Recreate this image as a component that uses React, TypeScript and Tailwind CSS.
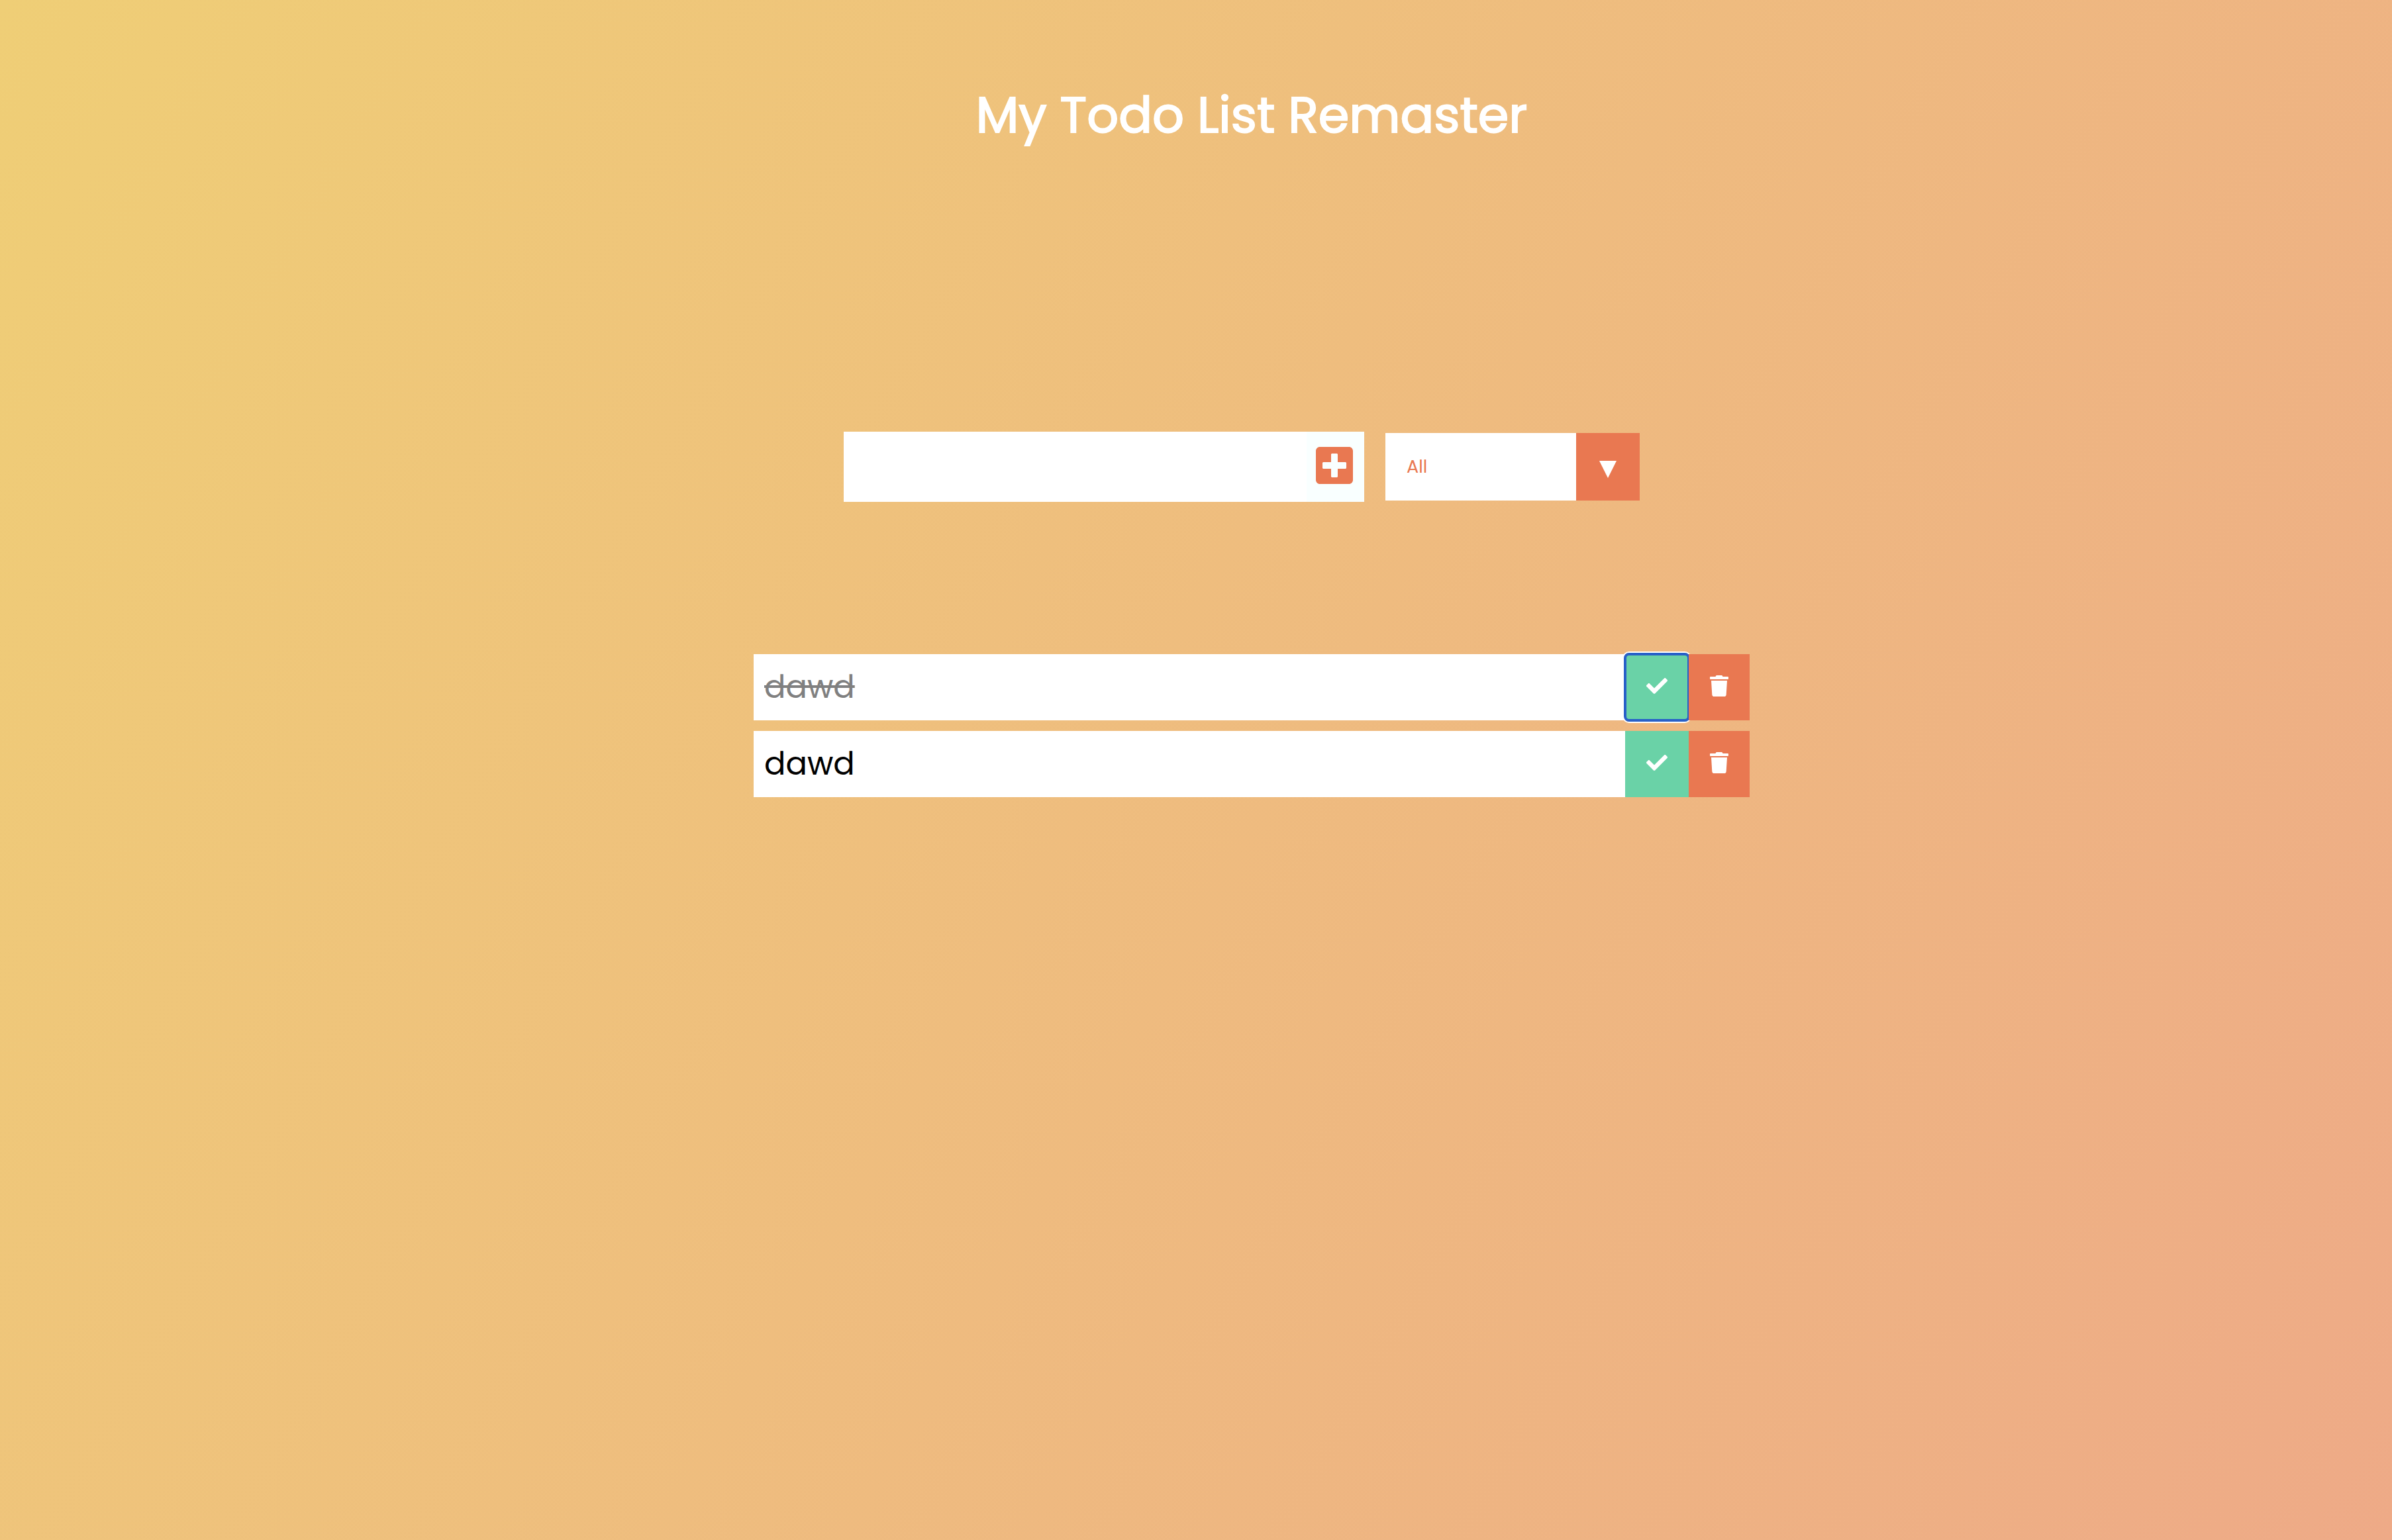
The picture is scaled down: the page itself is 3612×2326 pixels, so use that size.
import { useState } from "react";
import { FaCheck, FaPlusSquare, FaTrash } from "react-icons/fa";

type Todo = { id: number; text: string; completed: boolean };

const initialTodos: Todo[] = [
  { id: 1, text: "dawd", completed: true },
  { id: 2, text: "dawd", completed: false },
];

function TodoForm({ onAdd }: { onAdd: (text: string) => void }) {
  const [text, setText] = useState("");
  return (
    <form
      className="flex"
      onSubmit={(e) => {
        e.preventDefault();
        if (text.trim()) onAdd(text.trim());
        setText("");
      }}
    >
      <input
        type="text"
        aria-label="New todo"
        value={text}
        onChange={(e) => setText(e.target.value)}
        className="h-[106px] w-[699px] bg-white px-4 text-5xl text-black outline-none"
      />
      <button type="submit" aria-label="Add todo" className="flex w-[87px] items-center bg-[#f9ffff] pb-1 pl-3.5 text-[64px] text-[#e97851]">
        <FaPlusSquare className="w-14" />
      </button>
    </form>
  );
}

function TodoFilter({ value, onChange }: { value: string; onChange: (value: string) => void }) {
  return (
    <div className="relative w-96">
      <select
        aria-label="Filter todos"
        value={value}
        onChange={(e) => onChange(e.target.value)}
        className="h-[102px] w-full appearance-none bg-white px-8 text-[27px] text-[#e97851] outline-none"
      >
        <option value="all">All</option>
        <option value="completed">Completed</option>
        <option value="uncompleted">Uncompleted</option>
      </select>
      <div className="pointer-events-none absolute inset-y-0 right-0 flex w-24 items-center justify-center bg-[#e97851] pt-2">
        <svg width="26" height="26" viewBox="0 0 26 26" fill="white" aria-hidden="true">
          <path d="M0 0H26L13 26Z" />
        </svg>
      </div>
    </div>
  );
}

function TodoItem({ todo, focused, onToggle, onRemove }: { todo: Todo; focused: boolean; onToggle: () => void; onRemove: () => void }) {
  return (
    <li className="flex h-[100px] bg-white text-[32px] text-white">
      <span className={todo.completed ? "flex flex-1 items-center px-4 text-5xl text-[#808080]" : "flex flex-1 items-center px-4 text-5xl text-black"}>
        <span className={todo.completed ? "line-through decoration-4" : ""}>{todo.text}</span>
      </span>
      <button
        type="button"
        aria-label="Complete"
        onClick={onToggle}
        className={
          focused
            ? "relative flex items-center bg-[#6ad2a7] px-8 pb-1 outline-none after:absolute after:-inset-0.5 after:rounded-lg after:border-4 after:border-[#2860c8] after:shadow-[0_0_0_2px_white]"
            : "relative flex items-center bg-[#6ad2a7] px-8 pb-1 outline-none"
        }
      >
        <FaCheck />
      </button>
      <button type="button" aria-label="Delete" onClick={onRemove} className="relative z-10 flex items-center bg-[#e97851] px-8 pb-1">
        <FaTrash className="w-7" />
      </button>
    </li>
  );
}

export default function App() {
  const [todos, setTodos] = useState(initialTodos);
  const [filter, setFilter] = useState("all");
  const [focusedId, setFocusedId] = useState(1);
  const visible = todos.filter((t) => filter === "all" || (filter === "completed") === t.completed);

  return (
    <div className="flex min-h-screen flex-col items-center bg-[linear-gradient(120deg,#efce76,#eeaa87)] pl-[168px] font-['Poppins',Inter,sans-serif]">
      <header className="pt-[114px]">
        <h1 className="text-[75px] leading-[120px] font-normal text-white [-webkit-text-stroke:2px_white]">My Todo List Remaster</h1>
      </header>
      <main className="flex flex-col items-center">
        <div className="mt-[418px] flex items-center gap-8 pr-[30px]">
          <TodoForm onAdd={(text) => setTodos([...todos, { id: Date.now(), text, completed: false }])} />
          <TodoFilter value={filter} onChange={setFilter} />
        </div>
        <ul className="mt-[230px] flex w-[1504px] flex-col gap-4">
          {visible.map((todo) => (
            <TodoItem
              key={todo.id}
              todo={todo}
              focused={todo.id === focusedId}
              onToggle={() => {
                setFocusedId(todo.id);
                setTodos(todos.map((t) => (t.id === todo.id ? { ...t, completed: !t.completed } : t)));
              }}
              onRemove={() => setTodos(todos.filter((t) => t.id !== todo.id))}
            />
          ))}
        </ul>
      </main>
    </div>
  );
}
